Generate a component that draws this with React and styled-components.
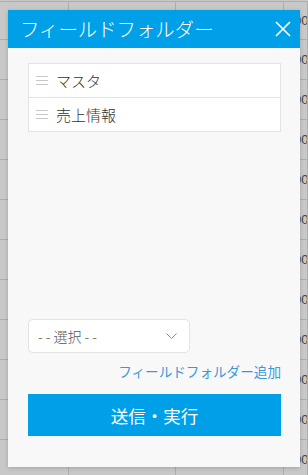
import React from "react";
import styled, { createGlobalStyle } from "styled-components";

const Global = createGlobalStyle`
  html, body { margin: 0; padding: 0; }
  body {
    width: 308px;
    height: 475px;
    overflow: hidden;
    background: #c8c8c8;
    font-family: "Noto Sans CJK JP", "Noto Sans", sans-serif;
  }
`;

const Page = styled.div`
  position: relative;
  width: 308px;
  height: 475px;
  overflow: hidden;
  background: #c8c8c8;
`;

const Table = styled.div`
  margin-top: 1px;
  border-top: 1px solid #adadad;
  display: flex;
  flex-direction: column;
`;

const Row = styled.div`
  display: grid;
  grid-template-columns: 69px 107px 108px 1fr;
  height: ${(p) => (p.$first ? 38 : 40)}px;
  box-sizing: border-box;
  border-bottom: 1px solid #adadad;
`;

const Cell = styled.div`
  border-right: 1px solid #adadad;
  display: flex;
  align-items: center;
  padding-left: 10px;
  font-family: "Liberation Sans", sans-serif;
  font-size: 13px;
  color: #444;
  white-space: nowrap;
  overflow: hidden;
`;

const Dialog = styled.div`
  position: absolute;
  left: 8px;
  top: 10px;
  width: 292px;
  height: 457px;
  background: #f8f8f8;
  box-shadow: 0 1px 4px rgba(0, 0, 0, 0.18);
  display: flex;
  flex-direction: column;
`;

const Header = styled.div`
  height: 38px;
  background: #00a0e9;
  display: flex;
  align-items: center;
  justify-content: space-between;
  padding: 0 8px 0 12px;
  flex-shrink: 0;
`;

const Title = styled.div`
  color: #fff;
  font-size: 19.4px;
  font-weight: 300;
  line-height: 1;
`;

const CloseButton = styled.button`
  width: 18px;
  height: 18px;
  padding: 0;
  border: 0;
  background: none;
  display: flex;
  align-items: center;
  justify-content: center;
  cursor: pointer;
`;

const Body = styled.div`
  flex: 1;
  display: flex;
  flex-direction: column;
  padding: 15px 19px 31px 20px;
`;

const List = styled.div`
  background: #fff;
  border: 1px solid #e3e3e3;
  display: flex;
  flex-direction: column;
`;

const Item = styled.div`
  height: 33px;
  display: flex;
  align-items: center;
  gap: 8px;
  padding-left: 7px;
  border-top: ${(p) => (p.$first ? "none" : "1px solid #e3e3e3")};
  font-size: 15px;
  font-weight: 300;
  color: #333;
`;

const Handle = styled.span`
  width: 12px;
  height: 9px;
  display: flex;
  flex-direction: column;
  justify-content: space-between;
  & > i {
    display: block;
    height: 1px;
    background: #c8c8c8;
  }
`;

const Footer = styled.div`
  margin-top: auto;
  display: flex;
  flex-direction: column;
`;

const Select = styled.div`
  width: 162px;
  height: 34px;
  box-sizing: border-box;
  background: #fff;
  border: 1px solid #e2e2e2;
  border-radius: 5px;
  display: flex;
  align-items: center;
  justify-content: space-between;
  padding: 0 12px 0 9px;
  font-size: 14px;
  font-weight: 300;
  color: #555;
`;

const LinkText = styled.a`
  align-self: flex-end;
  margin-top: 9px;
  font-size: 13.6px;
  color: #3a9ad8;
  text-decoration: none;
  line-height: 18px;
`;

const Submit = styled.button`
  margin-top: 14px;
  height: 42px;
  border: 0;
  background: #00a0e9;
  color: #fff;
  font-family: inherit;
  font-size: 17.5px;
  display: flex;
  align-items: center;
  justify-content: center;
  cursor: pointer;
`;

const rows = Array.from({ length: 12 });

export default function App() {
  return (
    <Page>
      <Global />
      <Table>
        {rows.map((_, i) => (
          <Row key={i} $first={i === 0}>
            <Cell />
            <Cell />
            <Cell />
            <Cell>000</Cell>
          </Row>
        ))}
      </Table>
      <Dialog>
        <Header>
          <Title>フィールドフォルダー</Title>
          <CloseButton aria-label="close">
            <svg width="16" height="16" viewBox="0 0 16 16">
              <path d="M1 1 L15 15 M15 1 L1 15" stroke="#fff" strokeWidth="1.7" fill="none" />
            </svg>
          </CloseButton>
        </Header>
        <Body>
          <List>
            {["マスタ", "売上情報"].map((t, i) => (
              <Item key={t} $first={i === 0}>
                <Handle>
                  <i />
                  <i />
                  <i />
                </Handle>
                {t}
              </Item>
            ))}
          </List>
          <Footer>
            <Select>
              <span>- - 選択 - -</span>
              <svg width="11" height="6" viewBox="0 0 11 6">
                <path d="M0.5 0.5 L5.5 5.5 L10.5 0.5" stroke="#888" strokeWidth="1" fill="none" />
              </svg>
            </Select>
            <LinkText href="#">フィールドフォルダー追加</LinkText>
            <Submit>送信・実行</Submit>
          </Footer>
        </Body>
      </Dialog>
    </Page>
  );
}
